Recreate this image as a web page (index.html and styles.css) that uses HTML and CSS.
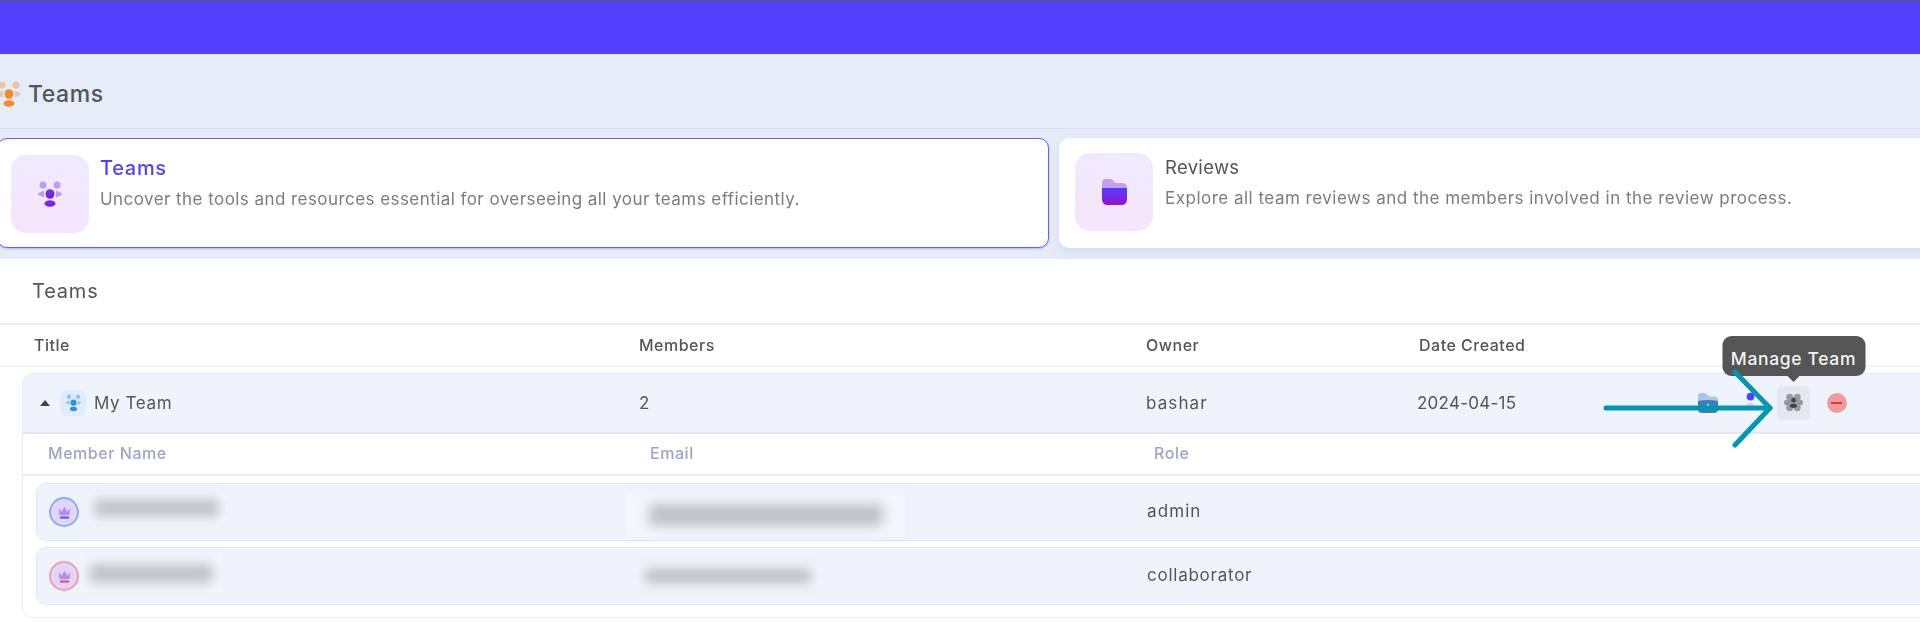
FILE: index.html
```html
<!DOCTYPE html>
<html lang="en">
<head>
<meta charset="utf-8">
<title>Teams</title>
<link rel="stylesheet" href="styles.css">
</head>
<body>
<svg class="defs" width="0" height="0">
  <defs>
    <linearGradient id="tpurple" x1="0" y1="0" x2="0" y2="1"><stop offset="0" stop-color="#5040ff"/><stop offset="1" stop-color="#9a0fd0"/></linearGradient>
    <symbol id="team" viewBox="0 0 26 27">
      <circle cx="6" cy="4" r="3.5" opacity=".4"/>
      <circle cx="20" cy="4" r="3.5" opacity=".4"/>
      <path d="M7 9.5 L1.5 12 Q0.5 13 1.5 14 L7 16.5 Z" opacity=".4"/>
      <path d="M19 9.5 L24.5 12 Q25.5 13 24.5 14 L19 16.5 Z" opacity=".4"/>
      <ellipse cx="13" cy="13" rx="4.5" ry="4.8"/>
      <ellipse cx="13" cy="22.5" rx="5.5" ry="3.2"/>
    </symbol>
    <symbol id="crown" viewBox="0 0 18 18">
      <path d="M2 4 L5.5 8 L9 2 L12.5 8 L16 4 L15 12 H3 Z" fill="#b08cf0"/>
      <rect x="3.5" y="13.5" width="11" height="3" rx="1"/>
    </symbol>
  </defs>
</svg>
<div class="page">
  <div class="topbar"></div>
  <header class="head">
    <div class="head-title">
      <svg class="head-icon"><use href="#team"/></svg>
      <h1>Teams</h1>
    </div>
    <div class="tabs">
      <div class="tab tab-active">
        <div class="tab-box"><svg class="tab-team"><use href="#team"/></svg></div>
        <div class="tab-text">
          <h2>Teams</h2>
          <p>Uncover the tools and resources essential for overseeing all your teams efficiently.</p>
        </div>
      </div>
      <div class="tab tab-plain">
        <div class="tab-box">
          <svg class="tab-folder" viewBox="0 0 25 26">
            <path d="M0 9 V3.5 Q0 0 3.5 0 H8 Q11 0 12 2.5 Q13 4 15 4 H20 Q25 4 25 9 Z" fill="#c99df0"/>
            <path d="M0 9 H25 V20 Q25 26 19 26 H6 Q0 26 0 20 Z" fill="url(#tpurple)"/>
          </svg>
        </div>
        <div class="tab-text">
          <h3>Reviews</h3>
          <p>Explore all team reviews and the members involved in the review process.</p>
        </div>
      </div>
    </div>
  </header>

  <div class="section-title">Teams</div>
  <div class="table-head">
    <span>Title</span><span>Members</span><span>Owner</span><span>Date Created</span>
  </div>

  <div class="team-card">
    <div class="team-row">
      <div class="team-name">
        <span class="caret"></span>
        <span class="team-badge"><svg class="badge-icon"><use href="#team"/></svg></span>
        <span>My Team</span>
      </div>
      <span>2</span>
      <span class="wide">bashar</span>
      <span class="tight">2024-04-15</span>
      <div class="actions">
        <span class="action">
          <svg class="ico-folder" viewBox="0 0 20 20">
            <path d="M0 10 V3 Q0 0 3 0 H6 Q9 0 10 2.5 Q10.5 3.5 12 3.5 H16 Q20 3.5 20 7.5 V10 Z" fill="#a9c8e4"/>
            <path d="M0 8 Q5 7 10 7 T20 8 V16 Q20 20 16 20 H4 Q0 20 0 16 Z" fill="#3f7db5"/>
            <circle cx="10" cy="12" r="1" fill="#fff"/>
          </svg>
        </span>
        <span class="action">
          <svg class="ico-dots" viewBox="0 0 10 22">
            <circle cx="5" cy="5" r="4.3" fill="#5340ff"/>
            <circle cx="5" cy="16" r="4.5" fill="#d9d5ff"/>
          </svg>
        </span>
        <span class="action action-on">
          <svg class="ico-gear" viewBox="0 0 20 20">
            <g fill="#9a9a9e">
              <circle cx="6" cy="4.5" r="3.6"/><circle cx="14" cy="4.5" r="3.6"/>
              <circle cx="6" cy="15.5" r="3.6"/><circle cx="14" cy="15.5" r="3.6"/>
              <circle cx="3" cy="10" r="3"/><circle cx="17" cy="10" r="3"/>
              <circle cx="10" cy="10" r="6"/>
            </g>
            <circle cx="10" cy="7.5" r="2.4" fill="#444"/>
            <ellipse cx="10" cy="13.5" rx="3.6" ry="2.2" fill="#444"/>
          </svg>
          <span class="tooltip">Manage Team</span>
        </span>
        <span class="action"><span class="ico-minus"></span></span>
      </div>
    </div>
    <div class="member-head">
      <span>Member Name</span><span>Email</span><span>Role</span>
    </div>
    <div class="member first">
      <span class="avatar av-blue"><svg class="crown"><use href="#crown"/></svg></span>
      <span class="blur-wrap bw-name1"><span class="blur-bar"></span></span>
      <span class="blur-wrap bw-mail1"><span class="blur-bar"></span></span>
      <span class="role wide">admin</span>
    </div>
    <div class="member">
      <span class="avatar av-red"><svg class="crown"><use href="#crown"/></svg></span>
      <span class="blur-wrap bw-name2"><span class="blur-bar"></span></span>
      <span class="blur-wrap bw-mail2"><span class="blur-bar"></span></span>
      <span class="role">collaborator</span>
    </div>
  </div>

  <svg class="arrow" viewBox="0 0 180 84" fill="none" stroke="#0097b2" stroke-width="5" stroke-linecap="round" stroke-linejoin="round">
    <path d="M3 39 H167"/>
    <path d="M132 3 L167 39 L132 76"/>
  </svg>
</div>
</body>
</html>
```
FILE: styles.css
```css
* { box-sizing: border-box; }
html, body { margin: 0; padding: 0; background: #fff; overflow: hidden; }
body { font-family: Inter, "Liberation Sans", sans-serif; color: #555; }
.defs { position: absolute; }

.page { position: relative; width: 1920px; height: 622px; overflow: hidden; filter: blur(.55px); }

.topbar { height: 54px; background: #5340ff; border-top: 1px solid #5a5a66; }

.head { background: #e5ecf8; height: 205px; }
.head-title { height: 75px; padding-top: 6px; display: flex; align-items: center; border-bottom: 1px solid #d3dff5; margin-left: -4px; gap: 6px; }
.head-icon { width: 26px; height: 27px; fill: #f7892d; }
.head-title h1 { margin: 0; font-size: 23px; font-weight: 500; color: #555; letter-spacing: .55px; }

.tabs { display: flex; gap: 10px; margin: 9px 0 0 -3px; width: 2000px; }
.tab { height: 110px; background: #fff; border-radius: 10px; display: flex; padding: 16px 0 0 13px; gap: 11px; }
.tab-active { width: 1052px; border: 1.5px solid #6b5dff; box-shadow: 0 1px 2px rgba(107, 93, 255, .4); }
.tab-plain { flex: 1; padding-top: 15px; padding-left: 16px; gap: 12px; box-shadow: 0 6px 10px rgba(170, 180, 225, .25); }
.tab-box { width: 78px; height: 78px; border-radius: 15px; background: linear-gradient(20deg, #f6e4fa, #eeebff); display: flex; align-items: center; justify-content: center; flex: none; }
.tab-team { width: 26px; height: 27px; fill: url(#tpurple); }
.tab-folder { width: 25px; height: 26px; }
.tab-text { padding-top: 1px; }
.tab-text h2, .tab-text h3 { margin: 0; font-size: 20px; line-height: 24px; font-weight: 500; letter-spacing: .7px; }
.tab-text h2 { color: #5340ff; }
.tab-text h3 { color: #555; font-weight: 400; font-size: 18.5px; letter-spacing: .3px; padding-top: 1px; }
.tab-text p { margin: 7px 0 0; font-size: 17px; line-height: 24px; color: #7c7c7c; letter-spacing: .44px; }
.tab-plain .tab-text p { letter-spacing: .49px; }

.section-title { height: 66px; padding: 21px 0 0 32px; font-size: 20px; line-height: 22px; color: #555; letter-spacing: .8px; border-bottom: 2px solid #eceef2; }

.table-head { height: 42px; display: grid; grid-template-columns: 605px 507px 273px 1fr; align-items: center; padding-left: 34px; font-size: 16px; font-weight: 500; color: #555; letter-spacing: .5px; border-bottom: 2px solid #f3f4f7; }

.team-card { margin: 6px 0 0 22px; width: 1950px; height: 245px; border: 1px solid #e8ecf4; border-radius: 10px; }
.team-row { height: 60px; padding-bottom: 1px; background: #eff4fc; border-bottom: 2px solid #e1e6f1; border-radius: 9px 0 0 0; display: grid; grid-template-columns: 599px 507px 271px 274px 1fr; align-items: center; padding-left: 17px; font-size: 17px; color: #555; letter-spacing: .6px; }
.wide { letter-spacing: 1.1px; }
.tight { letter-spacing: .25px; }
.team-name { display: flex; align-items: center; }
.caret { width: 0; height: 0; border: 5px solid transparent; border-top-width: 0; border-bottom: 6px solid #444; margin-right: 10px; }
.team-badge { width: 26px; height: 26px; border-radius: 7px; background: #dfecfb; display: flex; align-items: center; justify-content: center; margin-right: 8px; }
.badge-icon { width: 17px; height: 18px; fill: #2c8cf0; }

.actions { display: flex; gap: 10px; align-items: center; }
.action { position: relative; width: 33px; height: 34px; border-radius: 5px; display: flex; align-items: center; justify-content: center; }
.action-on { background: #e4e8f2; }
.ico-folder { width: 20px; height: 20px; }
.ico-dots { width: 9px; height: 22px; margin-bottom: 1px; }
.ico-gear { width: 19px; height: 19px; }
.ico-minus { width: 20px; height: 20px; border-radius: 50%; background: #ec9c9a; display: flex; align-items: center; justify-content: center; }
.ico-minus::after { content: ""; width: 11px; height: 2px; background: #e0353a; }

.tooltip { position: absolute; left: 50%; bottom: 44px; transform: translateX(-50%); width: 143px; height: 40px; padding-top: 5px; border-radius: 9px; background: #555; color: #f2f2f2; font-size: 17.5px; font-weight: 500; letter-spacing: .65px; display: flex; align-items: center; justify-content: center; white-space: nowrap; }
.tooltip::after { content: ""; position: absolute; left: 50%; top: 100%; transform: translateX(-50%); border: 6px solid transparent; border-top-color: #555; border-bottom-width: 0; }

.member-head { height: 42px; padding-bottom: 2px; background: #fff; display: grid; grid-template-columns: 602px 504px 1fr; align-items: center; padding-left: 25px; font-size: 16px; font-weight: 500; color: #9ca4c8; letter-spacing: .55px; border-bottom: 2px solid #e8ecf4; }

.member { position: relative; margin: 6px 0 0 13px; height: 58px; padding-bottom: 2px; background: #eff4fc; border: 1px solid #e1e6f1; border-radius: 10px; display: flex; align-items: center; padding-left: 12px; font-size: 17px; color: #555; letter-spacing: .75px; }
.member.first { margin-top: 7px; }
.avatar { width: 30px; height: 30px; border-radius: 50%; background: #e3d4f8; border: 2px solid #86aefc; display: flex; align-items: center; justify-content: center; flex: none; margin-top: 2px; }
.av-blue { color: #5a6ef0; }
.av-red { border-color: #f2a0a8; color: #e0607c; }
.crown { width: 15px; height: 15px; fill: currentColor; }
.role { position: absolute; left: 1110px; }

.blur-wrap { position: absolute; background: rgba(255, 255, 255, .25); display: flex; align-items: center; justify-content: center; }
.blur-bar { background: #bfc1c5; filter: blur(6px); border-radius: 4px; }
.bw-name1 { left: 48px; top: 9px; width: 143px; height: 30px; }
.bw-name1 .blur-bar { width: 88%; height: 60%; }
.bw-mail1 { left: 590px; top: 9px; width: 278px; height: 44px; }
.bw-mail1 .blur-bar { width: 84%; height: 48%; }
.bw-name2 { left: 43px; top: 6px; width: 142px; height: 38px; }
.bw-name2 .blur-bar { width: 88%; height: 50%; }
.bw-mail2 { left: 598px; top: 16px; width: 186px; height: 24px; }
.bw-mail2 .blur-bar { width: 90%; height: 66%; }

.arrow { position: absolute; left: 1603px; top: 369px; width: 180px; height: 84px; }
```
